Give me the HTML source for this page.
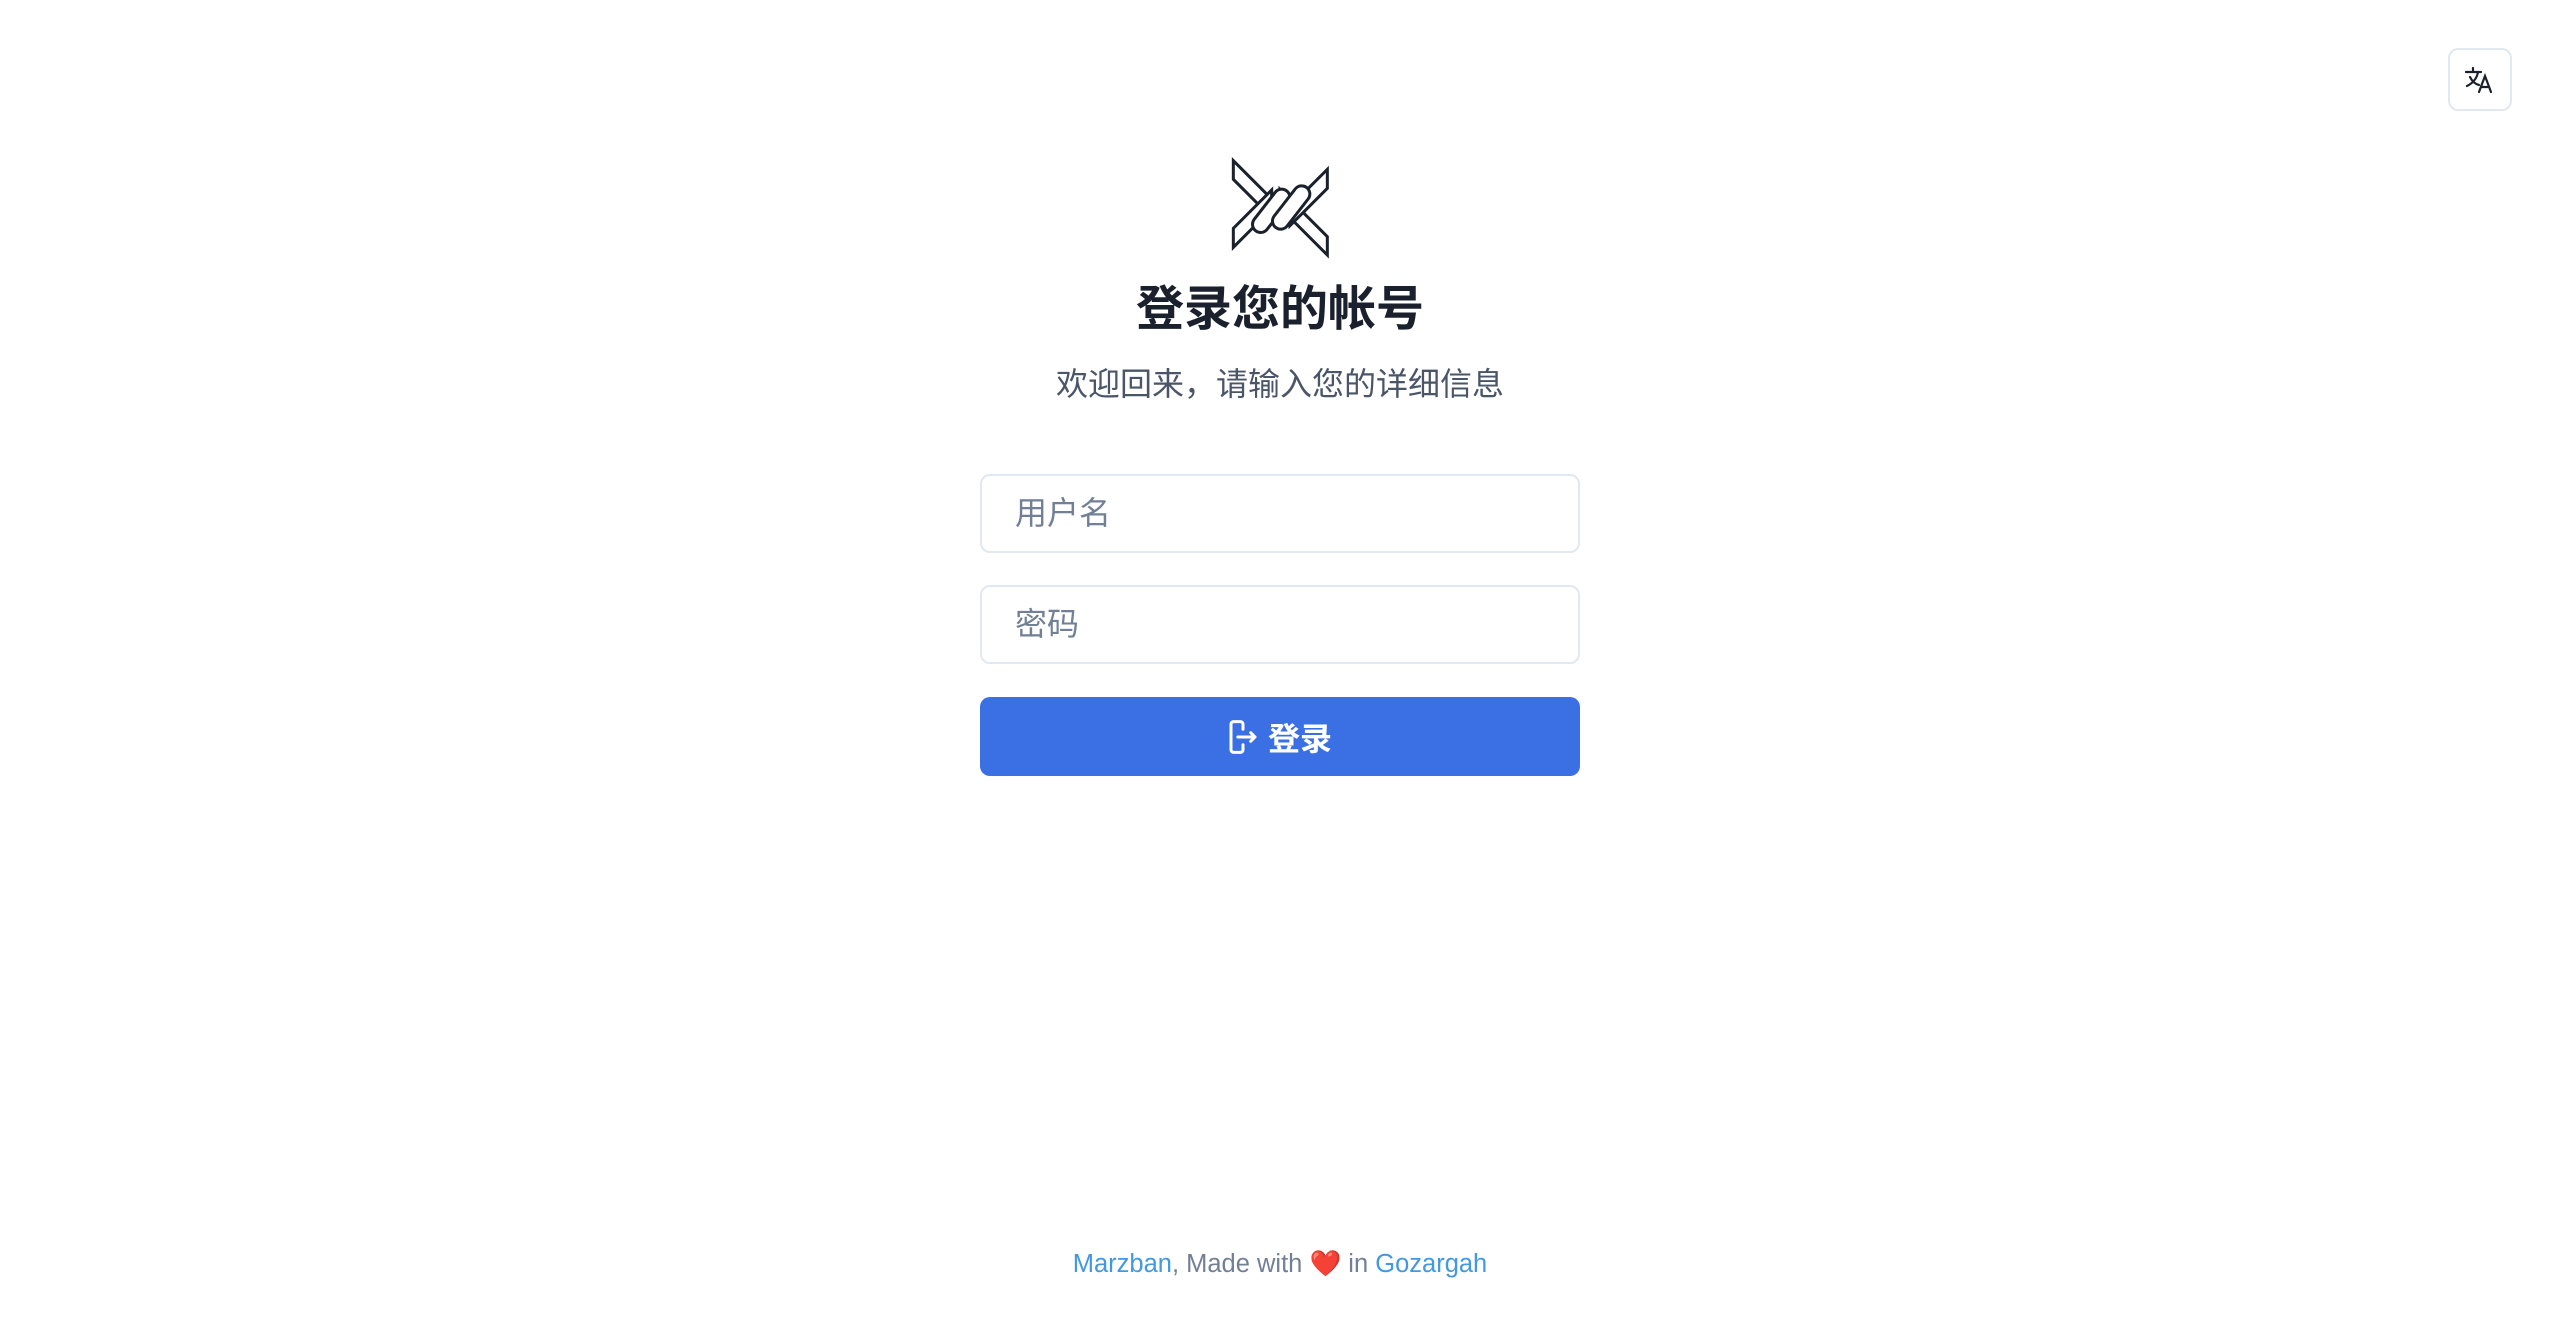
<!DOCTYPE html>
<html><head><meta charset="utf-8"><style>
*{margin:0;padding:0;box-sizing:border-box}
html,body{width:2560px;height:1330px;background:#fff;overflow:hidden;font-family:"Liberation Sans","Noto Sans CJK SC",sans-serif}
.abs{position:absolute}
.lang{left:2448px;top:48px;width:64px;height:63px;border:2px solid #e2e8f0;border-radius:10px;display:flex;align-items:center;justify-content:center}
h1{position:absolute;left:0;width:2560px;top:280px;text-align:center;font-size:48px;font-weight:700;color:#1a202c;line-height:60px}
.sub{position:absolute;left:0;width:2560px;top:360px;text-align:center;font-size:32px;color:#4a5568;line-height:48px}
.inp{position:absolute;left:980px;width:600px;height:79px;border:2px solid #e2e8f0;border-radius:10px;font-size:32px;color:#718096;padding-left:33px;line-height:75px}
.btn{position:absolute;left:980px;top:697px;width:600px;height:79px;background:#3a70e3;border-radius:10px;color:#fff;font-size:32px;font-weight:700;display:flex;align-items:center;justify-content:center}
.foot{position:absolute;left:0;width:2560px;top:1248px;text-align:center;font-size:25.5px;color:#718096;line-height:32px}
.foot a{color:#4299e1;text-decoration:none}
</style></head><body>
<div class="abs lang"><svg width="30" height="28" viewBox="0 0 30 28" fill="none" stroke="#1a202c" stroke-width="2.2" stroke-linecap="round"><path d="M1 6h15M8 2v4M13 6c-1 6-5 11-11 14M5 11c2 4 5 7 9 8M14 26l6-16 6 16M16 21h8"/></svg></div>
<svg class="abs" style="left:1200px;top:140px" width="160" height="160" viewBox="0 0 480 480" fill="#fff" stroke="#1a202c" stroke-width="9" stroke-linejoin="miter">
<polygon points="100,62 100,118 230,248 230,192"/>
<polygon points="382,290 382,345 240,203 240,148"/>
<polygon points="382,88 382,145 270,257 270,200"/>
<polygon points="100,265 100,322 215,207 215,150"/>
<g stroke-linecap="round" fill="none">
<path d="M182 253 L245 172" stroke="#1a202c" stroke-width="58"/><path d="M182 253 L245 172" stroke="#fff" stroke-width="40"/>
<path d="M242 243 L305 162" stroke="#1a202c" stroke-width="58"/><path d="M242 243 L305 162" stroke="#fff" stroke-width="40"/>
</g>
</svg>
<h1>登录您的帐号</h1>
<div class="sub">欢迎回来，请输入您的详细信息</div>
<div class="inp" style="top:474px">用户名</div>
<div class="inp" style="top:585px">密码</div>
<div class="btn"><svg width="30" height="36" viewBox="0 0 34 42" fill="none" stroke="#fff" stroke-width="3.5" stroke-linecap="round" stroke-linejoin="round" style="margin-right:10px"><path d="M17 12V6a3 3 0 0 0-3-3H6a3 3 0 0 0-3 3v30a3 3 0 0 0 3 3h8a3 3 0 0 0 3-3v-6M11 21h20M26 16l5 5-5 5"/></svg>登录</div>
<div class="foot"><a>Marzban</a>, Made with <span style="color:#e53e3e">❤️</span> in <a>Gozargah</a></div>
</body></html>
